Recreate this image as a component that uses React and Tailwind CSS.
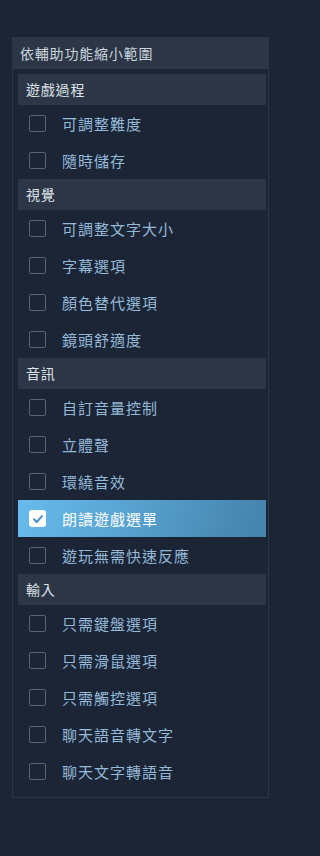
import React from "react";

const groups = [
  { title: "遊戲過程", items: ["可調整難度", "隨時儲存"] },
  { title: "視覺", items: ["可調整文字大小", "字幕選項", "顏色替代選項", "鏡頭舒適度"] },
  { title: "音訊", items: ["自訂音量控制", "立體聲", "環繞音效", "朗讀遊戲選單", "遊玩無需快速反應"] },
  { title: "輸入", items: ["只需鍵盤選項", "只需滑鼠選項", "只需觸控選項", "聊天語音轉文字", "聊天文字轉語音"] },
];

const checked = "朗讀遊戲選單";

const font = { fontFamily: '"Noto Sans CJK TC", "Noto Sans", sans-serif' };

function Row({ label }) {
  const on = label === checked;
  return (
    <div
      className={
        "h-[37px] flex items-center pl-[11px] " +
        (on ? "bg-[linear-gradient(110deg,#66b9ea_5%,#4584ad_95%)]" : "")
      }
    >
      {on ? (
        <span className="w-[17px] h-[17px] rounded-[3px] bg-white flex items-center justify-center">
          <svg width="12" height="12" viewBox="0 0 12 12">
            <path d="M2 6.3 L4.8 9 L10 3.2" fill="none" stroke="#4a90c2" strokeWidth="2" strokeLinecap="round" strokeLinejoin="round" />
          </svg>
        </span>
      ) : (
        <span className="w-[17px] h-[17px] rounded-[2px] border-[1.5px] border-[#59626e]" />
      )}
      <span
        className={
          "ml-[16px] text-[15px] tracking-[1px] leading-none " +
          (on ? "text-white" : "text-[#94b9d9]")
        }
      >
        {label}
      </span>
    </div>
  );
}

export default function App() {
  return (
    <div className="w-full min-h-[856px] bg-[#1b2536] pt-[37px] pl-[12px]" style={font}>
      <div className="w-[257px] border border-[#2b3646]">
        <div className="h-[31px] bg-[#2c3646] flex items-center px-[7px] text-[14px] tracking-[0.8px] text-[#c8d4de]">
          依輔助功能縮小範圍
        </div>
        <div className="pl-[5px] pr-[2px] pt-[5px] pb-[7px]">
          {groups.map((g) => (
            <div key={g.title}>
              <div className="h-[31px] bg-[#2c3646] flex items-center px-[8px] text-[14px] tracking-[0.8px] text-[#dde3e8]">
                {g.title}
              </div>
              {g.items.map((it) => (
                <Row key={it} label={it} />
              ))}
            </div>
          ))}
        </div>
      </div>
    </div>
  );
}
